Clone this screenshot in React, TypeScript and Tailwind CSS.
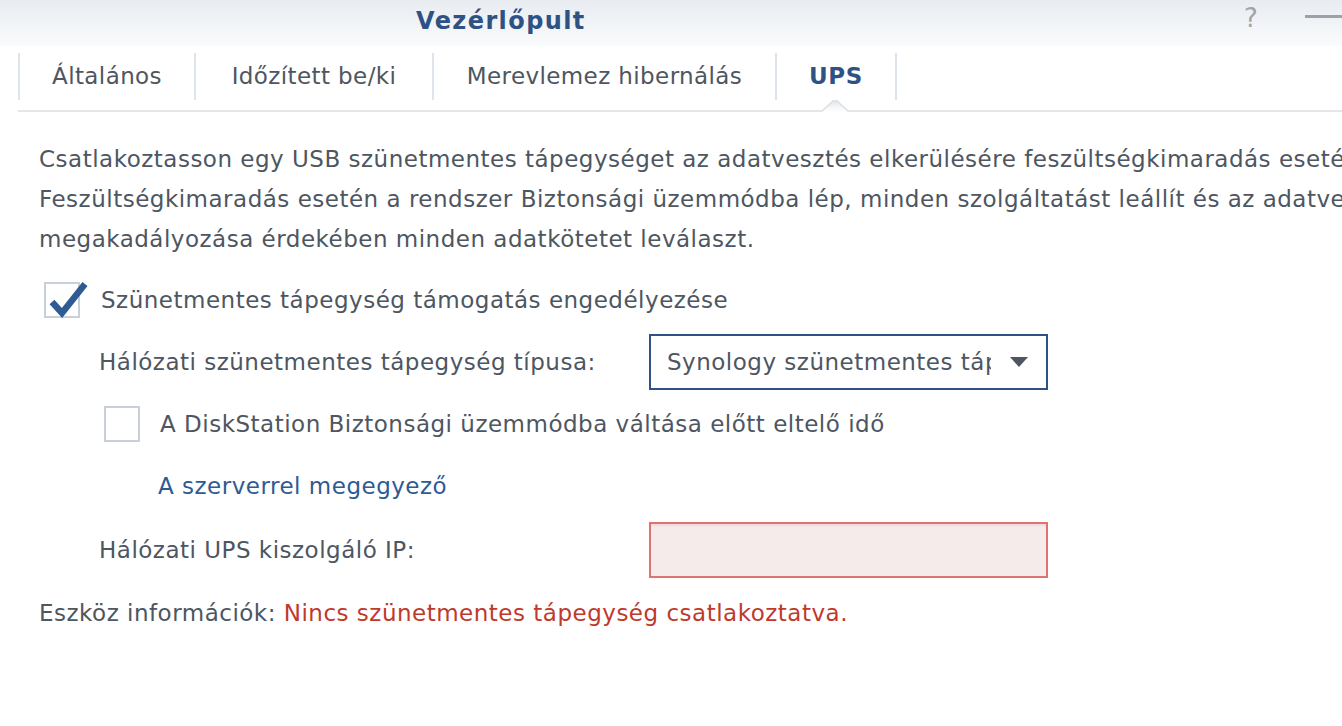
import React from "react";

const font = { fontFamily: '"DejaVu Sans", Verdana, sans-serif' };

export default function App() {
  return (
    <div className="w-[1342px] h-[726px] overflow-hidden bg-white text-[#4d5661]" style={font}>
      {/* Header */}
      <div className="relative h-[46px] bg-gradient-to-b from-[#e8ecf1] to-[#fafbfc] flex items-center">
        <div className="absolute left-[416px] top-[3px] text-[24px] font-bold text-[#2f5284] tracking-[1.4px]">Vezérlőpult</div>
        <div className="absolute left-[1244px] top-[5px] text-[26px] text-[#a0a5ab] leading-none">?</div>
        <div className="absolute right-0 top-[15px] w-[37px] h-[3px] bg-[#9da2a8]" />
      </div>
      {/* Tabs */}
      <div className="relative h-[66px]">
        <div className="flex h-[54px] pl-[18px] pt-[7px]">
          <div className="border-l-2 border-[#dde4ec] h-[47px] w-[176px] flex items-center justify-center text-[23px] tracking-[0.4px]">Általános</div>
          <div className="border-l-2 border-[#dde4ec] h-[47px] w-[238px] flex items-center justify-center text-[23px] tracking-[0.4px]">Időzített be/ki</div>
          <div className="border-l-2 border-[#dde4ec] h-[47px] w-[343px] flex items-center justify-center text-[23px] tracking-[0.4px]">Merevlemez hibernálás</div>
          <div className="border-l-2 border-r-2 border-[#dde4ec] h-[47px] w-[122px] flex items-center justify-center text-[23px] font-bold text-[#2f5284] tracking-[0.6px]">UPS</div>
        </div>
        <svg className="absolute left-0 top-[54px]" width="1342" height="16" viewBox="0 0 1342 16">
          <defs>
            <linearGradient id="sh" x1="0" y1="0" x2="0" y2="1">
              <stop offset="0" stopColor="#d6d9dd" />
              <stop offset="1" stopColor="#ffffff" stopOpacity="0" />
            </linearGradient>
          </defs>
          <path d="M18 11 L822 11 L835 -1 L848 11 L1342 11 L1342 15 L18 15 Z" fill="url(#sh)" />
          <path d="M18 11 L822 11 L835 -1 L848 11 L1342 11" fill="none" stroke="#dcdfe3" strokeWidth="1.5" />
        </svg>
      </div>
      {/* Body */}
      <div className="pl-[39px] text-[23px] tracking-[0.5px] leading-[40px] whitespace-nowrap pt-[27px]">
        <div>Csatlakoztasson egy USB szünetmentes tápegységet az adatvesztés elkerülésére feszültségkimaradás esetén.</div>
        <div>Feszültségkimaradás esetén a rendszer Biztonsági üzemmódba lép, minden szolgáltatást leállít és az adatvesztés</div>
        <div>megakadályozása érdekében minden adatkötetet leválaszt.</div>
      </div>
      <div className="flex items-center pl-[44px] mt-[23px] h-[36px]">
        <div className="relative w-[36px] h-[36px] border-2 border-[#c9d0da] bg-white">
          <svg className="absolute left-[3px] top-[-3px]" width="40" height="40" viewBox="0 0 40 40">
            <path d="M3 21 L13 32 L36 3" fill="none" stroke="#2f5a94" strokeWidth="6.5" strokeLinejoin="miter" strokeLinecap="butt" />
          </svg>
        </div>
        <span className="ml-[21px] text-[23px] tracking-[0.5px]">Szünetmentes tápegység támogatás engedélyezése</span>
      </div>
      <div className="flex items-center pl-[99px] mt-[16px] h-[56px]">
        <span className="w-[550px] text-[23px] tracking-[0.5px]">Hálózati szünetmentes tápegység típusa:</span>
        <div className="w-[399px] h-[56px] border-2 border-[#2f5284] flex items-center pl-[16px] pr-[18px]">
          <span className="w-[324px] overflow-hidden whitespace-nowrap text-[23px] tracking-[0.5px]">Synology szünetmentes tápegység</span>
          <div className="ml-auto w-0 h-0 border-l-[9px] border-r-[9px] border-t-[10px] border-l-transparent border-r-transparent border-t-[#4d5661]" />
        </div>
      </div>
      <div className="flex items-center pl-[104px] mt-[16px] h-[36px]">
        <div className="w-[36px] h-[36px] border-2 border-[#c9d0da] bg-white" />
        <span className="ml-[20px] text-[23px] tracking-[0.5px]">A DiskStation Biztonsági üzemmódba váltása előtt eltelő idő</span>
      </div>
      <div className="pl-[158px] mt-[26px] text-[23px] tracking-[0.5px] text-[#2f5a94] leading-[36px]">A szerverrel megegyező</div>
      <div className="flex items-center pl-[99px] mt-[18px] h-[56px]">
        <span className="w-[550px] text-[23px] tracking-[0.5px]">Hálózati UPS kiszolgáló IP:</span>
        <div className="w-[399px] h-[56px] border-2 border-[#df7370] bg-[#f6ebeb] shadow-[inset_0_3px_2px_-1px_#ecdcdc]" />
      </div>
      <div className="pl-[39px] mt-[17px] text-[23px] tracking-[0.5px] leading-[36px]">
        Eszköz információk: <span className="text-[#c0392b]">Nincs szünetmentes tápegység csatlakoztatva.</span>
      </div>
    </div>
  );
}
